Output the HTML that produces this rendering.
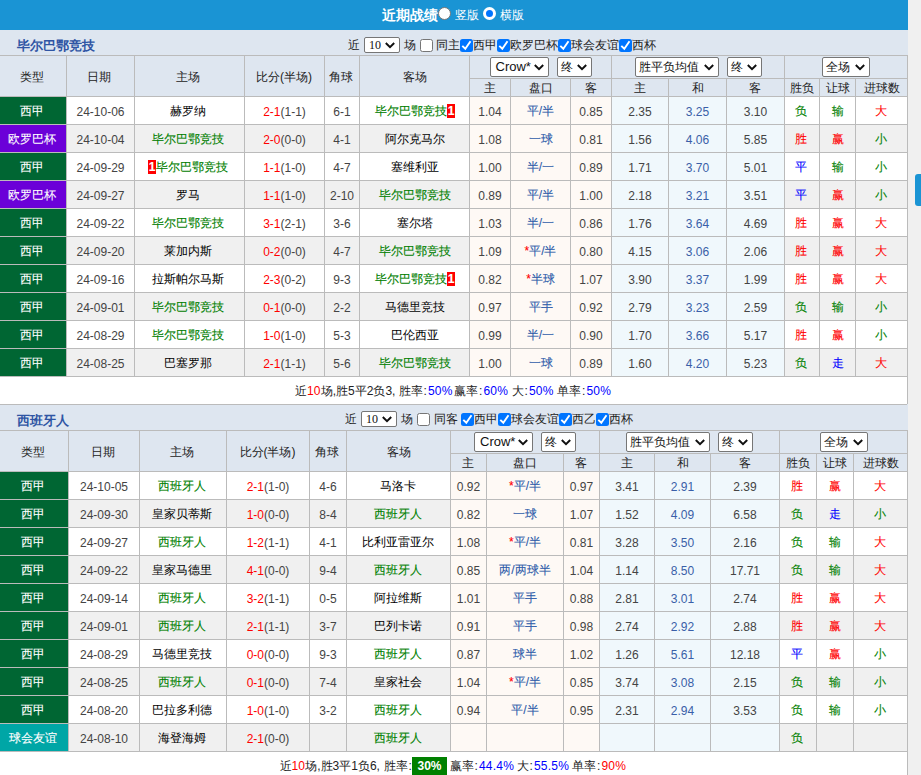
<!DOCTYPE html>
<html><head><meta charset="utf-8"><title>近期战绩</title>
<style>
html,body{margin:0;padding:0}
body{width:921px;height:775px;overflow:hidden;background:#f0f0f0;font-family:"Liberation Sans",sans-serif;font-size:12px;color:#333;position:relative}
#w{width:908px;background:#fff;position:absolute;left:0;top:0;height:775px;overflow:hidden}
.top{height:30px;background:#1a94d4;color:#fff;text-align:center;line-height:30px;font-size:12px;position:relative}
.top b{font-size:14px;position:absolute;top:0;line-height:30px}
.top .tx{position:absolute;top:0;line-height:30px}
.rd{position:absolute;top:7px;width:13px;height:13px;border-radius:50%;box-sizing:border-box}
.rd.on{background:#fff;border:1px solid #777}
.rd.off{background:#0075ff;border:3px solid #fff}
table.t{border-collapse:collapse;table-layout:fixed;width:908px;margin:0 0 0 -1px}
.t td{border:1px solid #bbb;text-align:center;padding:1px 3px 0 0;height:26px;line-height:14px;white-space:nowrap;overflow:hidden;color:#000;font-size:12px}
.t tr.tt td{height:24px;padding-top:0;background:#dee6f0;border-left:none;border-right:1px solid #dee6f0;text-align:left;position:relative}
.t1 tr.tt td{border-top-color:#dee6f0}
.t2 tr.tt td{height:25px}
.nm{color:#2f55a4;font-size:13px;margin-left:17px;line-height:24px;position:relative;top:3px}
.flt{position:absolute;left:0;top:2px;height:24px;line-height:24px;color:#222}
.t tr.hd td{background:#dee6f0;color:#222}
.t tr.h1 td{height:22px;padding-top:0}
.t tr.h1 td[colspan]{padding-left:3px}
.t tr.h1 td[rowspan]{height:20px;padding-top:2px}
.t tr.h2 td{height:16px;padding-top:1px}
.t td.d,.t td.a,.t td.e{padding:3px 0 0 0;height:24px}
.t td.a.p{padding:1px 3px 0 0;height:26px}
.t td.g,.t td.r,.t td.b,.t td.lg,.t td.lp,.t td.lt{-webkit-text-stroke:0.1px}
.t td.a.p{-webkit-text-stroke:0.1px}
.t td.d{color:#444}
.t td.g{color:#008000}
.r{color:#f00}
.b{color:#00f}
.t td.a{background:#fef9f5;color:#444}
.t td.a.p{color:#2e5caa}
.t td.a em{color:#f00;font-style:normal}
.t td.e{background:#f0f8fc;color:#444}
.t td.e.h{color:#3a5fa8}
.t td.r{color:#f00}.t td.g{color:#008000}.t td.b{color:#00f}

.t1 tr.r td:nth-child(6){padding:1px 0 0 1px}
.t2 tr.r td:nth-child(6){padding:1px 1px 0 0}
.t2 tr.r td:nth-child(3){padding:1px 2px 0 0}
.t tr.r td:nth-child(8),.t tr.r td:nth-child(14){padding-right:0}
.t tr.r td:nth-child(15){padding-right:1px}
.t tr.r td:nth-child(13){padding-right:2px}
.t tr.h1 td:nth-child(4){padding-right:1px}
.t tr.h1 td:nth-child(6){padding-right:0}
.t tr.h2 td{padding-right:1px}
.t tr.h2 td:nth-child(2),.t tr.h2 td:nth-child(5),.t tr.h2 td:nth-child(8),.t tr.h2 td:nth-child(9){padding-right:0}
.t tr.alt td{background:#f0f0f0}
.t tr.alt td.a{background:#fef9f5}
.t tr.alt td.e{background:#f0f8fc}
.t tr td.lg{background:#006633;color:#fff}
.t tr td.lp{background:#6b00d8;color:#fff}
.t tr td.lt{background:#00a6a6;color:#fff}
.rc{display:inline-block;background:#f00;color:#fff;font-weight:bold;font-style:normal;width:8px;height:14px;line-height:14px;font-size:12px;text-align:center;vertical-align:middle;margin-top:-2px}
.t tr.sm td{height:27px;padding:0;border:none;border-right:1px solid #bbb;background:#fff;text-align:left;color:#222;position:relative}
.sg{position:absolute;top:7px;line-height:14px;white-space:nowrap}
.sg i{font-style:normal;display:inline-block;width:5.5px;text-align:center}
.sg .b,.sg .r{letter-spacing:0.2px}
.hl{position:absolute;top:5px;width:35px;text-align:center;background:#008000;color:#fff;font-weight:bold;height:20px;line-height:19px}
.sel{display:inline-block;box-sizing:border-box;height:20px;line-height:18px;border:1px solid #767676;border-radius:2px;background:#fff;color:#111;vertical-align:middle;text-align:left;padding-left:3px;position:relative;font-size:12px;overflow:hidden;white-space:nowrap}
.sel svg{position:absolute;right:4px;top:6px}
.gp{display:inline-block;width:8px}
.sel.s10{margin-top:-2px;height:16px;line-height:14px;font-family:"Liberation Serif",serif;padding-left:4px}
.sel.s10 svg{top:4px;right:4px}
.cb{display:inline-block;box-sizing:border-box;width:13px;height:13px;border:1px solid #767676;border-radius:2.5px;background:#fff;vertical-align:middle;margin:0;position:relative}
.cb.on{background:#0075ff;border:none}
.cb.on svg{position:absolute;left:0;top:0}
#tab{position:absolute;left:915px;top:174px;width:10px;height:32px;background:#1a94d4;border-radius:3px}
</style></head>
<body>
<div id="w">
<div class="top"><b style="left:382px">近期战绩</b><span class="rd on" style="left:438px"></span><span class="tx" style="left:455px">竖版</span><span class="rd off" style="left:483px"></span><span class="tx" style="left:500px">横版</span></div>
<table class="t t1">
<colgroup><col style="width:67px"><col style="width:68px"><col style="width:110px"><col style="width:80px"><col style="width:35px"><col style="width:110px"><col style="width:41px"><col style="width:60px"><col style="width:41px"><col style="width:57px"><col style="width:58px"><col style="width:58px"><col style="width:35px"><col style="width:36px"><col style="width:52px"></colgroup>
<tr class="tt"><td colspan="15"><b class="nm">毕尔巴鄂竞技</b><span class="flt" style="left:348.5px">近<span style="display:inline-block;width:4px"></span><span class="sel s10" style="width:36px">10<svg viewBox="0 0 10 7" width="10" height="7"><path d="M0.8 1 L5 5.2 L9.2 1" fill="none" stroke="#111" stroke-width="2"/></svg></span><span style="display:inline-block;width:4px"></span>场<span style="display:inline-block;width:4px"></span><span class="cb"></span><span style="display:inline-block;width:3px"></span>同主<span class="cb on"><svg viewBox="0 0 13 13" width="13" height="13"><path d="M2.3 6.9 L5.3 9.8 L10.5 2.3" fill="none" stroke="#fff" stroke-width="1.9"/></svg></span>西甲<span class="cb on"><svg viewBox="0 0 13 13" width="13" height="13"><path d="M2.3 6.9 L5.3 9.8 L10.5 2.3" fill="none" stroke="#fff" stroke-width="1.9"/></svg></span>欧罗巴杯<span class="cb on"><svg viewBox="0 0 13 13" width="13" height="13"><path d="M2.3 6.9 L5.3 9.8 L10.5 2.3" fill="none" stroke="#fff" stroke-width="1.9"/></svg></span>球会友谊<span class="cb on"><svg viewBox="0 0 13 13" width="13" height="13"><path d="M2.3 6.9 L5.3 9.8 L10.5 2.3" fill="none" stroke="#fff" stroke-width="1.9"/></svg></span>西杯</span></td></tr>
<tr class="hd h1"><td rowspan="2">类型</td><td rowspan="2">日期</td><td rowspan="2">主场</td><td rowspan="2">比分(半场)</td><td rowspan="2">角球</td><td rowspan="2">客场</td>
<td colspan="3"><span class="sel" style="width:59px"><span style="font-size:13px;margin-left:2px">Crow*</span><svg viewBox="0 0 10 7" width="10" height="7"><path d="M0.8 1 L5 5.2 L9.2 1" fill="none" stroke="#111" stroke-width="2"/></svg></span><span class="gp"></span><span class="sel" style="width:35px">终<svg viewBox="0 0 10 7" width="10" height="7"><path d="M0.8 1 L5 5.2 L9.2 1" fill="none" stroke="#111" stroke-width="2"/></svg></span></td><td colspan="3"><span class="sel" style="width:84px">胜平负均值<svg viewBox="0 0 10 7" width="10" height="7"><path d="M0.8 1 L5 5.2 L9.2 1" fill="none" stroke="#111" stroke-width="2"/></svg></span><span class="gp"></span><span class="sel" style="width:35px">终<svg viewBox="0 0 10 7" width="10" height="7"><path d="M0.8 1 L5 5.2 L9.2 1" fill="none" stroke="#111" stroke-width="2"/></svg></span></td><td colspan="3"><span class="sel" style="width:48px">全场<svg viewBox="0 0 10 7" width="10" height="7"><path d="M0.8 1 L5 5.2 L9.2 1" fill="none" stroke="#111" stroke-width="2"/></svg></span></td></tr>
<tr class="hd h2"><td>主</td><td>盘口</td><td>客</td><td>主</td><td>和</td><td>客</td><td>胜负</td><td>让球</td><td>进球数</td></tr>
<tr class="r"><td class="lg">西甲</td><td class="d">24-10-06</td><td>赫罗纳</td><td class="d"><span class="r">2-1</span>(1-1)</td><td class="d">6-1</td><td class="g">毕尔巴鄂竞技<i class="rc">1</i></td><td class="a">1.04</td><td class="a p">平/半</td><td class="a">0.85</td><td class="e">2.35</td><td class="e h">3.25</td><td class="e">3.10</td><td class="g">负</td><td class="g">输</td><td class="r">大</td></tr>
<tr class="r alt"><td class="lp">欧罗巴杯</td><td class="d">24-10-04</td><td class="g">毕尔巴鄂竞技</td><td class="d"><span class="r">2-0</span>(0-0)</td><td class="d">4-1</td><td>阿尔克马尔</td><td class="a">1.08</td><td class="a p">一球</td><td class="a">0.81</td><td class="e">1.56</td><td class="e h">4.06</td><td class="e">5.85</td><td class="r">胜</td><td class="r">赢</td><td class="g">小</td></tr>
<tr class="r"><td class="lg">西甲</td><td class="d">24-09-29</td><td class="g"><i class="rc">1</i>毕尔巴鄂竞技</td><td class="d"><span class="r">1-1</span>(1-0)</td><td class="d">4-7</td><td>塞维利亚</td><td class="a">1.00</td><td class="a p">半/一</td><td class="a">0.89</td><td class="e">1.71</td><td class="e h">3.70</td><td class="e">5.01</td><td class="b">平</td><td class="g">输</td><td class="g">小</td></tr>
<tr class="r alt"><td class="lp">欧罗巴杯</td><td class="d">24-09-27</td><td>罗马</td><td class="d"><span class="r">1-1</span>(1-0)</td><td class="d">2-10</td><td class="g">毕尔巴鄂竞技</td><td class="a">0.89</td><td class="a p">平/半</td><td class="a">1.00</td><td class="e">2.18</td><td class="e h">3.21</td><td class="e">3.51</td><td class="b">平</td><td class="r">赢</td><td class="g">小</td></tr>
<tr class="r"><td class="lg">西甲</td><td class="d">24-09-22</td><td class="g">毕尔巴鄂竞技</td><td class="d"><span class="r">3-1</span>(2-1)</td><td class="d">3-6</td><td>塞尔塔</td><td class="a">1.03</td><td class="a p">半/一</td><td class="a">0.86</td><td class="e">1.76</td><td class="e h">3.64</td><td class="e">4.69</td><td class="r">胜</td><td class="r">赢</td><td class="r">大</td></tr>
<tr class="r alt"><td class="lg">西甲</td><td class="d">24-09-20</td><td>莱加内斯</td><td class="d"><span class="r">0-2</span>(0-0)</td><td class="d">4-7</td><td class="g">毕尔巴鄂竞技</td><td class="a">1.09</td><td class="a p"><em>*</em>平/半</td><td class="a">0.80</td><td class="e">4.15</td><td class="e h">3.06</td><td class="e">2.06</td><td class="r">胜</td><td class="r">赢</td><td class="r">大</td></tr>
<tr class="r"><td class="lg">西甲</td><td class="d">24-09-16</td><td>拉斯帕尔马斯</td><td class="d"><span class="r">2-3</span>(0-2)</td><td class="d">9-3</td><td class="g">毕尔巴鄂竞技<i class="rc">1</i></td><td class="a">0.82</td><td class="a p"><em>*</em>半球</td><td class="a">1.07</td><td class="e">3.90</td><td class="e h">3.37</td><td class="e">1.99</td><td class="r">胜</td><td class="r">赢</td><td class="r">大</td></tr>
<tr class="r alt"><td class="lg">西甲</td><td class="d">24-09-01</td><td class="g">毕尔巴鄂竞技</td><td class="d"><span class="r">0-1</span>(0-0)</td><td class="d">2-2</td><td>马德里竞技</td><td class="a">0.97</td><td class="a p">平手</td><td class="a">0.92</td><td class="e">2.79</td><td class="e h">3.23</td><td class="e">2.59</td><td class="g">负</td><td class="g">输</td><td class="g">小</td></tr>
<tr class="r"><td class="lg">西甲</td><td class="d">24-08-29</td><td class="g">毕尔巴鄂竞技</td><td class="d"><span class="r">1-0</span>(1-0)</td><td class="d">5-3</td><td>巴伦西亚</td><td class="a">0.99</td><td class="a p">半/一</td><td class="a">0.90</td><td class="e">1.70</td><td class="e h">3.66</td><td class="e">5.17</td><td class="r">胜</td><td class="r">赢</td><td class="g">小</td></tr>
<tr class="r alt"><td class="lg">西甲</td><td class="d">24-08-25</td><td>巴塞罗那</td><td class="d"><span class="r">2-1</span>(1-1)</td><td class="d">5-6</td><td class="g">毕尔巴鄂竞技</td><td class="a">1.00</td><td class="a p">一球</td><td class="a">0.89</td><td class="e">1.60</td><td class="e h">4.20</td><td class="e">5.23</td><td class="g">负</td><td class="b">走</td><td class="r">大</td></tr>
<tr class="sm"><td colspan="15"><span class="sg" style="left:295.5px">近<span class="r">10</span>场,胜5平2负3,</span><span class="sg" style="left:399px">胜率<i>:</i><span class="b">50%</span></span><span class="sg" style="left:454.5px">赢率<i>:</i><span class="b">60%</span></span><span class="sg" style="left:512px">大<i>:</i><span class="b">50%</span></span><span class="sg" style="left:557.5px">单率<i>:</i><span class="b">50%</span></span></td></tr>
</table>
<table class="t t2">
<colgroup><col style="width:69px"><col style="width:71px"><col style="width:87px"><col style="width:83px"><col style="width:37px"><col style="width:104px"><col style="width:36px"><col style="width:77px"><col style="width:36px"><col style="width:55px"><col style="width:56px"><col style="width:69px"><col style="width:37px"><col style="width:37px"><col style="width:54px"></colgroup>
<tr class="tt"><td colspan="15"><b class="nm">西班牙人</b><span class="flt" style="left:345.5px">近<span style="display:inline-block;width:4px"></span><span class="sel s10" style="width:36px">10<svg viewBox="0 0 10 7" width="10" height="7"><path d="M0.8 1 L5 5.2 L9.2 1" fill="none" stroke="#111" stroke-width="2"/></svg></span><span style="display:inline-block;width:4px"></span>场<span style="display:inline-block;width:4px"></span><span class="cb"></span><span style="display:inline-block;width:4px"></span>同客<span style="display:inline-block;width:3px"></span><span class="cb on"><svg viewBox="0 0 13 13" width="13" height="13"><path d="M2.3 6.9 L5.3 9.8 L10.5 2.3" fill="none" stroke="#fff" stroke-width="1.9"/></svg></span>西甲<span class="cb on"><svg viewBox="0 0 13 13" width="13" height="13"><path d="M2.3 6.9 L5.3 9.8 L10.5 2.3" fill="none" stroke="#fff" stroke-width="1.9"/></svg></span>球会友谊<span class="cb on"><svg viewBox="0 0 13 13" width="13" height="13"><path d="M2.3 6.9 L5.3 9.8 L10.5 2.3" fill="none" stroke="#fff" stroke-width="1.9"/></svg></span>西乙<span class="cb on"><svg viewBox="0 0 13 13" width="13" height="13"><path d="M2.3 6.9 L5.3 9.8 L10.5 2.3" fill="none" stroke="#fff" stroke-width="1.9"/></svg></span>西杯</span></td></tr>
<tr class="hd h1"><td rowspan="2">类型</td><td rowspan="2">日期</td><td rowspan="2">主场</td><td rowspan="2">比分(半场)</td><td rowspan="2">角球</td><td rowspan="2">客场</td>
<td colspan="3"><span class="sel" style="width:59px"><span style="font-size:13px;margin-left:2px">Crow*</span><svg viewBox="0 0 10 7" width="10" height="7"><path d="M0.8 1 L5 5.2 L9.2 1" fill="none" stroke="#111" stroke-width="2"/></svg></span><span class="gp"></span><span class="sel" style="width:35px">终<svg viewBox="0 0 10 7" width="10" height="7"><path d="M0.8 1 L5 5.2 L9.2 1" fill="none" stroke="#111" stroke-width="2"/></svg></span></td><td colspan="3"><span class="sel" style="width:84px">胜平负均值<svg viewBox="0 0 10 7" width="10" height="7"><path d="M0.8 1 L5 5.2 L9.2 1" fill="none" stroke="#111" stroke-width="2"/></svg></span><span class="gp"></span><span class="sel" style="width:35px">终<svg viewBox="0 0 10 7" width="10" height="7"><path d="M0.8 1 L5 5.2 L9.2 1" fill="none" stroke="#111" stroke-width="2"/></svg></span></td><td colspan="3"><span class="sel" style="width:48px">全场<svg viewBox="0 0 10 7" width="10" height="7"><path d="M0.8 1 L5 5.2 L9.2 1" fill="none" stroke="#111" stroke-width="2"/></svg></span></td></tr>
<tr class="hd h2"><td>主</td><td>盘口</td><td>客</td><td>主</td><td>和</td><td>客</td><td>胜负</td><td>让球</td><td>进球数</td></tr>
<tr class="r"><td class="lg">西甲</td><td class="d">24-10-05</td><td class="g">西班牙人</td><td class="d"><span class="r">2-1</span>(1-0)</td><td class="d">4-6</td><td>马洛卡</td><td class="a">0.92</td><td class="a p"><em>*</em>平/半</td><td class="a">0.97</td><td class="e">3.41</td><td class="e h">2.91</td><td class="e">2.39</td><td class="r">胜</td><td class="r">赢</td><td class="r">大</td></tr>
<tr class="r alt"><td class="lg">西甲</td><td class="d">24-09-30</td><td>皇家贝蒂斯</td><td class="d"><span class="r">1-0</span>(0-0)</td><td class="d">8-4</td><td class="g">西班牙人</td><td class="a">0.82</td><td class="a p">一球</td><td class="a">1.07</td><td class="e">1.52</td><td class="e h">4.09</td><td class="e">6.58</td><td class="g">负</td><td class="b">走</td><td class="g">小</td></tr>
<tr class="r"><td class="lg">西甲</td><td class="d">24-09-27</td><td class="g">西班牙人</td><td class="d"><span class="r">1-2</span>(1-1)</td><td class="d">4-1</td><td>比利亚雷亚尔</td><td class="a">1.08</td><td class="a p"><em>*</em>平/半</td><td class="a">0.81</td><td class="e">3.28</td><td class="e h">3.50</td><td class="e">2.16</td><td class="g">负</td><td class="g">输</td><td class="r">大</td></tr>
<tr class="r alt"><td class="lg">西甲</td><td class="d">24-09-22</td><td>皇家马德里</td><td class="d"><span class="r">4-1</span>(0-0)</td><td class="d">9-4</td><td class="g">西班牙人</td><td class="a">0.85</td><td class="a p">两/两球半</td><td class="a">1.04</td><td class="e">1.14</td><td class="e h">8.50</td><td class="e">17.71</td><td class="g">负</td><td class="g">输</td><td class="r">大</td></tr>
<tr class="r"><td class="lg">西甲</td><td class="d">24-09-14</td><td class="g">西班牙人</td><td class="d"><span class="r">3-2</span>(1-1)</td><td class="d">0-5</td><td>阿拉维斯</td><td class="a">1.01</td><td class="a p">平手</td><td class="a">0.88</td><td class="e">2.81</td><td class="e h">3.01</td><td class="e">2.74</td><td class="r">胜</td><td class="r">赢</td><td class="r">大</td></tr>
<tr class="r alt"><td class="lg">西甲</td><td class="d">24-09-01</td><td class="g">西班牙人</td><td class="d"><span class="r">2-1</span>(1-1)</td><td class="d">3-7</td><td>巴列卡诺</td><td class="a">0.91</td><td class="a p">平手</td><td class="a">0.98</td><td class="e">2.74</td><td class="e h">2.92</td><td class="e">2.88</td><td class="r">胜</td><td class="r">赢</td><td class="r">大</td></tr>
<tr class="r"><td class="lg">西甲</td><td class="d">24-08-29</td><td>马德里竞技</td><td class="d"><span class="r">0-0</span>(0-0)</td><td class="d">9-3</td><td class="g">西班牙人</td><td class="a">0.87</td><td class="a p">球半</td><td class="a">1.02</td><td class="e">1.26</td><td class="e h">5.61</td><td class="e">12.18</td><td class="b">平</td><td class="r">赢</td><td class="g">小</td></tr>
<tr class="r alt"><td class="lg">西甲</td><td class="d">24-08-25</td><td class="g">西班牙人</td><td class="d"><span class="r">0-1</span>(0-0)</td><td class="d">7-4</td><td>皇家社会</td><td class="a">1.04</td><td class="a p"><em>*</em>平/半</td><td class="a">0.85</td><td class="e">3.74</td><td class="e h">3.08</td><td class="e">2.15</td><td class="g">负</td><td class="g">输</td><td class="g">小</td></tr>
<tr class="r"><td class="lg">西甲</td><td class="d">24-08-20</td><td>巴拉多利德</td><td class="d"><span class="r">1-0</span>(1-0)</td><td class="d">3-2</td><td class="g">西班牙人</td><td class="a">0.94</td><td class="a p">平/半</td><td class="a">0.95</td><td class="e">2.31</td><td class="e h">2.94</td><td class="e">3.53</td><td class="g">负</td><td class="g">输</td><td class="g">小</td></tr>
<tr class="r alt"><td class="lt">球会友谊</td><td class="d">24-08-10</td><td>海登海姆</td><td class="d"><span class="r">2-1</span>(0-0)</td><td class="d"></td><td class="g">西班牙人</td><td class="a"></td><td class="a p"></td><td class="a"></td><td class="e"></td><td class="e h"></td><td class="e"></td><td class="g">负</td><td class="g"></td><td class="g"></td></tr>
<tr class="sm"><td colspan="15"><span class="sg" style="left:280px">近<span class="r">10</span>场,胜3平1负6,</span><span class="sg" style="left:384px">胜率<i>:</i></span><span class="hl" style="left:412.5px">30%</span><span class="sg" style="left:450px">赢率<i>:</i><span class="b">44.4%</span></span><span class="sg" style="left:517px">大<i>:</i><span class="b">55.5%</span></span><span class="sg" style="left:572.5px">单率<i>:</i><span class="r">90%</span></span></td></tr>
</table>
</div>
<div id="tab"></div>
</body></html>
